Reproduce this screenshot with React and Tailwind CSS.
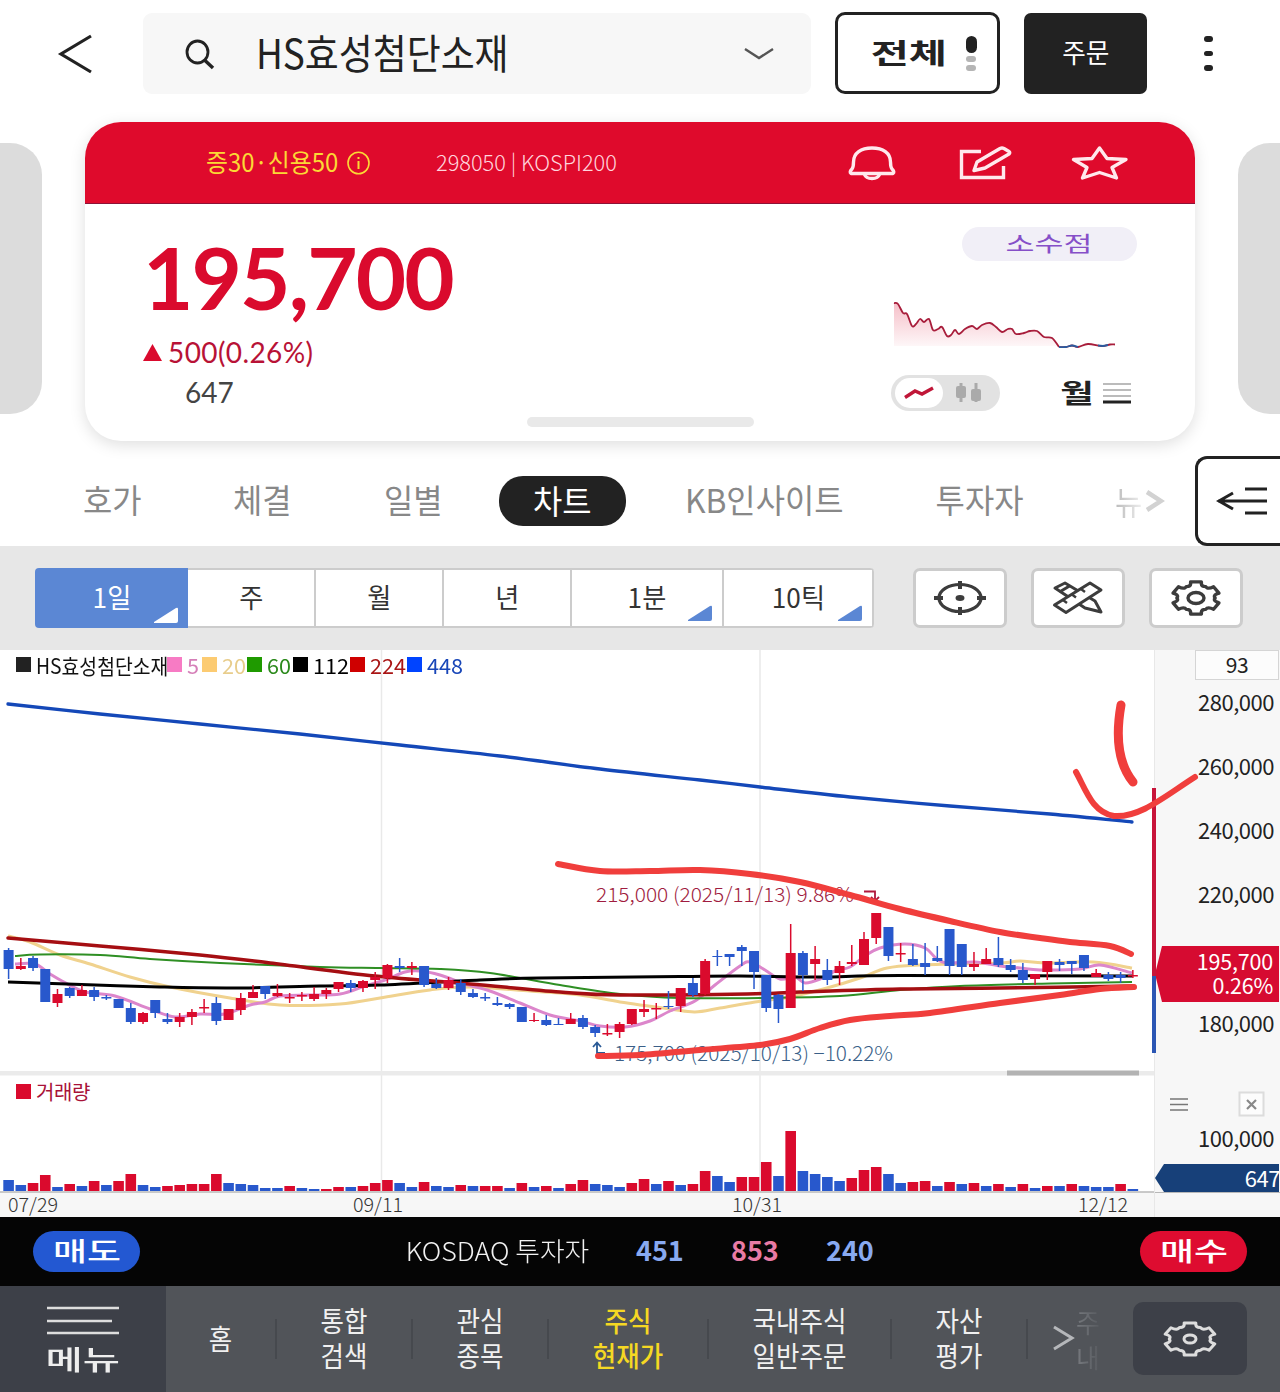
const RED = "#da0a2d";
const BLUE = "#2858cc";

// [direction, body top, body bottom, high, low, volume height, volume direction if it differs]
const CANDLES = [
  ["d", 950, 969, 948, 979, 11], ["u", 966, 969, 958, 970, 6, "d"], ["d", 958, 968, 956, 971, 8, "u"],
  ["d", 969, 1002, 969, 1002, 16, "u"], ["u", 994, 1003, 989, 1007, 4, "d"], ["d", 988, 996, 987, 998, 7, "u"],
  ["u", 990, 996, 985, 996, 5, "d"], ["d", 990, 997, 987, 1001, 10, "u"], ["d", 997, 998.5, 995, 1000, 6],
  ["d", 999, 1008, 999, 1008, 10, "u"], ["d", 1008, 1022, 1003, 1024, 17, "u"], ["u", 1013, 1022, 1012, 1024, 6, "d"],
  ["d", 1000, 1013, 1000, 1018, 4], ["d", 1019, 1022, 1013, 1024, 5, "u"], ["u", 1017, 1022, 1013, 1027, 6],
  ["u", 1012, 1017, 1009, 1025, 7], ["u", 1007, 1008.5, 999, 1013, 7], ["d", 1003, 1021, 997, 1025, 17, "u"],
  ["u", 1009, 1020, 1009, 1020, 8, "d"], ["u", 998, 1010, 993, 1015, 7, "d"], ["u", 992, 998, 985, 998, 6, "d"],
  ["d", 986, 994, 986, 999, 3], ["u", 993, 996, 984, 997, 3, "d"], ["u", 997, 998.5, 993, 1003, 5],
  ["u", 995, 996.5, 992, 1001, 3, "d"], ["u", 994, 999, 987, 1001, 2, "d"], ["u", 990, 994, 988, 999, 2],
  ["u", 982, 989, 982, 992, 4], ["d", 983, 988, 980, 992, 4], ["u", 981, 988, 980, 992, 5],
  ["u", 977, 980, 972, 989, 8], ["u", 965, 978, 964, 983, 11], ["d", 966, 968, 958, 972, 8],
  ["u", 966, 968, 962, 975, 4, "d"], ["d", 966, 985, 966, 987, 9, "u"], ["d", 984, 988, 978, 989, 5],
  ["u", 980, 988, 977, 990, 4, "d"], ["d", 983, 992, 979, 995, 6, "u"], ["d", 993, 997, 989, 998, 5],
  ["d", 997, 998.5, 993, 1001, 5, "u"], ["d", 1003, 1005, 997, 1006, 5, "u"], ["d", 1004, 1007, 1003, 1009, 3],
  ["d", 1007, 1022, 1007, 1022, 8, "u"], ["u", 1020, 1021, 1013, 1022, 4, "d"], ["d", 1020, 1025, 1015, 1026, 5, "u"],
  ["d", 1024, 1025, 1018, 1025, 3], ["u", 1019, 1024, 1013, 1024, 7], ["d", 1018, 1027, 1015, 1029, 11, "u"],
  ["d", 1027, 1033, 1025, 1037, 7], ["u", 1033, 1034.5, 1024, 1036, 6, "d"], ["u", 1024, 1032, 1022, 1038, 4, "d"],
  ["u", 1009, 1024, 1009, 1025, 8], ["u", 1009, 1012, 1000, 1017, 12], ["u", 1008, 1009.5, 1003, 1019, 7, "d"],
  ["d", 1006, 1007, 991, 1009, 10, "u"], ["u", 988, 1006, 988, 1012, 6, "d"], ["d", 983, 995, 978, 997, 7, "u"],
  ["u", 961, 994, 959, 995, 20], ["d", 956, 957, 950, 966, 15], ["d", 954, 957, 954, 966, 9],
  ["d", 947, 951, 945, 966, 14, "u"], ["d", 951, 972, 951, 989, 14, "u"], ["d", 975, 1008, 975, 1012, 29, "u"],
  ["d", 995, 1009, 994, 1023, 15], ["u", 953, 1008, 924, 1008, 60], ["d", 953, 975, 951, 991, 20],
  ["u", 959, 964, 946, 980, 17, "d"], ["d", 970, 980, 959, 985, 14], ["u", 966, 973, 961, 985, 10, "d"],
  ["u", 962, 964, 945, 966, 13], ["u", 939, 965, 932, 965, 21], ["u", 913, 938, 913, 944, 24],
  ["d", 927, 956, 927, 961, 17], ["u", 953, 954.5, 943, 962, 8, "d"], ["d", 959, 965, 944, 966, 9, "u"],
  ["d", 963, 967, 943, 975, 10, "u"], ["d", 958, 961, 946, 962, 5], ["d", 929, 966, 929, 975, 9, "u"],
  ["d", 944, 967, 944, 975, 7], ["u", 964, 967, 952, 971, 8], ["u", 959, 964, 948, 964, 5, "d"],
  ["d", 958, 965, 937, 967, 7, "u"], ["d", 965, 970, 959, 972, 4], ["d", 970, 980, 963, 983, 7, "u"],
  ["u", 974, 979, 974, 985, 3, "d"], ["u", 961, 972, 961, 980, 5], ["d", 962, 965, 959, 971, 5],
  ["d", 961, 964, 961, 974, 7, "u"], ["d", 955, 968, 955, 971, 5], ["u", 973, 977, 969, 977, 4, "d"],
  ["d", 975, 979, 972, 981, 4], ["d", 975, 978, 972, 983, 7, "u"], ["u", 975, 976.5, 970, 978, 2, "d"],
];

const MA5 = [[15, 964], [35, 964], [50, 974], [62, 981], [85, 992], [115, 996], [150, 1009], [175, 1017], [200, 1014], [225, 1014], [250, 1005], [265, 1002], [280, 996], [310, 995], [340, 994], [365, 986], [385, 980], [405, 972], [420, 971], [440, 975], [465, 984], [490, 991], [520, 1003], [550, 1015], [580, 1021], [600, 1026], [625, 1027], [650, 1021], [670, 1011], [695, 1001], [715, 985], [740, 966], [750, 962], [765, 970], [780, 979], [795, 977], [805, 983], [820, 979], [835, 971], [850, 967], [865, 956], [880, 948], [905, 944], [925, 948], [938, 960], [950, 963], [975, 962], [1000, 966], [1020, 968], [1040, 970], [1080, 969], [1100, 965], [1132, 973]];
const MA20 = [[8, 936], [30, 942], [60, 955], [90, 964], [130, 977], [170, 987], [230, 998], [280, 1005], [340, 1004], [380, 998], [430, 990], [470, 987], [530, 991], [580, 995], [620, 1002], [670, 1009], [695, 1012], [720, 1008], [755, 1002], [790, 997], [827, 988], [860, 978], [887, 968], [920, 965], [1000, 963], [1020, 961], [1045, 963], [1093, 962], [1132, 968]];
const MA60 = [[15, 956], [40, 954.5], [100, 955], [150, 959], [220, 963], [320, 967], [380, 968], [440, 969], [490, 973], [560, 985], [620, 994], [680, 998], [760, 998], [840, 996], [900, 990], [960, 986], [1050, 983.5], [1132, 982]];
const MA112 = [[8, 982], [67, 984], [160, 987], [233, 988], [320, 986], [380, 985], [480, 980], [540, 978], [680, 976.5], [740, 976], [820, 977], [900, 975.5], [1132, 976]];
const MA224 = [[8, 938], [100, 946], [200, 955], [270, 963], [375, 976], [470, 984], [560, 992], [620, 995], [747, 994], [800, 992], [900, 989], [1000, 988], [1132, 986]];
const MA448 = [[8, 704], [100, 714], [200, 724], [300, 734], [400, 745], [500, 756], [600, 769], [700, 780], [760, 787], [850, 797], [950, 806], [1050, 814], [1132, 822]];

const TOP_TREND = [[558, 864], [600, 871], [650, 871], [700, 870], [750, 874], [800, 882], [850, 895], [900, 909], [950, 921], [1000, 932], [1040, 938], [1070, 942], [1110, 946], [1131, 954]];
const BOTTOM_TREND = [[598, 1056], [640, 1055], [700, 1050], [760, 1045], [790, 1039], [820, 1028], [850, 1020], [890, 1016], [930, 1013], [1000, 1003], [1060, 995], [1100, 989], [1134, 987]];

const SPARK = [[894, 303], [898, 304], [903, 313], [907, 314], [912, 326], [916, 324], [920, 319], [924, 322], [929, 319], [933, 330], [938, 329], [942, 327], [947, 336], [951, 335], [955, 330], [959, 334], [965, 329], [972, 326], [977, 329], [982, 325], [990, 323], [996, 327], [1002, 332], [1008, 329], [1012, 329], [1016, 334], [1024, 333], [1030, 331], [1037, 331], [1044, 337], [1052, 338], [1059, 347]];
const SPARK_END = [[1059, 347], [1066, 347], [1072, 345.5], [1078, 347], [1088, 344], [1102, 346], [1110, 344.5], [1115, 344.5]];

// Catmull-Rom through every point
const curve = (pts) => {
  let d = `M${pts[0][0]} ${pts[0][1]}`;
  for (let i = 0; i < pts.length - 1; i++) {
    const a = pts[i - 1] || pts[i];
    const b = pts[i];
    const c = pts[i + 1];
    const e = pts[i + 2] || c;
    d += ` C${b[0] + (c[0] - a[0]) / 6} ${b[1] + (c[1] - a[1]) / 6} ${c[0] - (e[0] - b[0]) / 6} ${c[1] - (e[1] - b[1]) / 6} ${c[0]} ${c[1]}`;
  }
  return d;
};

// six-tooth gear, wider than tall
const gearPath = (rx, ry) => {
  const at = (deg, r) => {
    const rad = (deg * Math.PI) / 180;
    return `${(Math.cos(rad) * rx * r).toFixed(2)} ${(Math.sin(rad) * ry * r).toFixed(2)}`;
  };
  let d = "";
  for (let k = 0; k < 6; k++) {
    const c = -90 + k * 60;
    d += `${k ? "L" : "M"}${at(c - 13, 1)} L${at(c + 13, 1)} Q${at(c + 15, 0.78)} ${at(c + 24, 0.77)} Q${at(c + 30, 0.83)} ${at(c + 36, 0.77)} Q${at(c + 45, 0.78)} ${at(c + 47, 1)} `;
  }
  return `${d}Z`;
};

const Gear = ({ color, strokeWidth = 3.4, rx = 24, ry = 16.5, hole = 8 }) => (
  <svg width="60" height="42" viewBox="-30 -21 60 42" fill="none" stroke={color} strokeWidth={strokeWidth} strokeLinejoin="round">
    <path d={gearPath(rx, ry)} />
    <ellipse cx="0" cy="0" rx={hole} ry={hole * 0.68} />
  </svg>
);

const Header = () => (
  <header className="flex h-[94px] items-end">
    <button className="ml-[56px] flex h-[81px] w-[87px] items-center">
      <svg width="38" height="42" fill="none" stroke="#222" strokeWidth="3.2">
        <path d="M35 3 5 21 35 39" />
      </svg>
    </button>
    <div className="flex h-[81px] w-[668px] items-center rounded-[9px] bg-[#f7f7f7] pr-[36px] pl-[42px]">
      <svg width="31" height="32" fill="none" stroke="#222" strokeWidth="2.8">
        <ellipse cx="12.5" cy="14" rx="10.500" ry="11" />
        <path d="M19.500 22 28 30" strokeWidth="3.4" />
      </svg>
      <span className="ml-[40px] inline-block w-[400px] origin-left -translate-y-[2px] scale-x-[0.9] text-[41px] leading-none whitespace-nowrap text-[#222]">
        HS효성첨단소재
      </span>
      <svg className="ml-auto" width="32" height="14" fill="none" stroke="#555" strokeWidth="2.4">
        <path d="M2 2 16 11 30 2" />
      </svg>
    </div>
    <button className="ml-[24px] flex h-[82px] w-[165px] items-center rounded-[10px] border-[3.5px] border-[#222] pl-[45px]">
      <span className="inline-block -translate-y-px scale-x-[1.48] text-[28px] leading-none font-bold text-[#222]">
        전체
      </span>
      <span className="ml-[31px] flex flex-col items-center gap-[3px]">
        <span className="h-[17px] w-[11px] rounded-full bg-[#222]" />
        <span className="h-[6px] w-[10px] rounded-full bg-[#b5b5b5]" />
        <span className="h-[6px] w-[10px] rounded-full bg-[#b5b5b5]" />
      </span>
    </button>
    <button className="ml-[24px] flex h-[81px] w-[123px] items-center justify-center rounded-[7px] bg-[#222]">
      <span className="inline-block -translate-y-[2px] scale-x-[0.95] text-[27px] leading-none text-white">주문</span>
    </button>
    <div className="ml-[57px] flex h-[81px] flex-col items-center justify-center gap-[9px]">
      <span className="h-[5.5px] w-[9px] rounded-full bg-[#222]" />
      <span className="h-[5.5px] w-[9px] rounded-full bg-[#222]" />
      <span className="h-[5.5px] w-[9px] rounded-full bg-[#222]" />
    </div>
  </header>
);

const CardIcons = () => (
  <svg width="290" height="50" viewBox="840 138 290 50" fill="none" stroke="#ffe9ed" strokeWidth="3.4" strokeLinejoin="round">
    <path d="M851 173.500Q849 172 852 169Q853.500 167 853.500 162C853.500 153 861 148 872 148C883 148 890.500 153 890.500 162Q890.500 167 892 169Q895 172 893 173.500Z" />
    <path d="M864.500 174.500Q866 178.500 872 178.500Q878 178.500 879.500 174.500" />
    <path d="M981 151.500H961.500V177.500H1003.500V166" strokeLinejoin="miter" />
    <path d="M974 170.500 977 162 1000 148.500Q1002 147.500 1004 148.500L1009 151.500Q1010.500 152.500 1009 154L985 168Z" />
    <path d="M1099.500 148 1107 158.500 1126 159.500 1112 167.500 1116.500 178 1099.500 172.500 1082.500 178 1087 167.500 1073.500 159.500 1092 158.500Z" />
  </svg>
);

const StockCard = () => (
  <section className="mt-[28px] flex h-[319px] justify-between">
    <div className="mt-[21px] h-[271px] w-[42px] rounded-r-[32px] bg-[#dcdcdc]" />
    <div className="flex w-[1110px] flex-col overflow-hidden rounded-[36px] bg-white shadow-[0_4px_16px_rgba(0,0,0,0.13)]">
      <div className="flex h-[82px] items-center border-b border-[#8c1237] bg-[#df0a2c] pl-[121px]">
        <span className="inline-block w-[141px] origin-left -translate-y-px scale-x-[0.955] text-[25px] leading-none whitespace-nowrap text-[#fbd935]">
          증30·신용50
        </span>
        <svg width="23" height="24" fill="none" stroke="#fbd935" strokeWidth="1.600">
          <ellipse cx="11.500" cy="12" rx="10.500" ry="10.800" />
          <path d="M11.500 10V18M11.500 6V8" strokeWidth="2" />
        </svg>
        <span className="ml-[66px] inline-block w-[200px] origin-left -translate-y-[2px] scale-x-[0.99] text-[22px] leading-none font-light whitespace-nowrap text-[#ffd5dd]">
          298050 | KOSPI200
        </span>
        <div className="ml-auto pr-[65px]">
          <CardIcons />
        </div>
      </div>
      <div className="flex flex-1 justify-between pr-[58px] pl-[58px]">
        <div className="flex flex-col pt-[27px] font-['Lato','Noto_Sans_CJK_KR',sans-serif]">
          <span className="text-[87px] leading-[92px] font-bold tracking-[-1.900px] text-[#da0a2d]">195,700</span>
          <span className="mt-[11px] flex items-center text-[28px] leading-[36px] tracking-[0.4px] text-[#b81236]">
            <svg className="mr-[6px]" width="19" height="17">
              <path d="M9.500 0 19 17H0Z" fill={RED} />
            </svg>
            500(0.26%)
          </span>
          <span className="mt-[4px] pl-[42px] text-[28px] leading-[36px] text-[#444]">647</span>
        </div>
        <div className="flex w-[246px] flex-col">
          <div className="mt-[23px] ml-auto flex h-[34px] w-[175px] items-center justify-center rounded-full bg-[#f1eff7]">
            <span className="inline-block -translate-x-px -translate-y-[2px] scale-x-[1.5] text-[21px] leading-none text-[#864fc8]">
              소수점
            </span>
          </div>
          <svg className="mt-[34px]" width="246" height="60" viewBox="891 295 246 60" fill="none">
            <defs>
              <linearGradient id="spark" x1="0" y1="0" x2="0" y2="1">
                <stop offset="0" stopColor={RED} stopOpacity="0.260" />
                <stop offset="1" stopColor={RED} stopOpacity="0.030" />
              </linearGradient>
            </defs>
            <path d={`${curve(SPARK)} V346 H894Z`} fill="url(#spark)" />
            <path d={curve(SPARK)} stroke="#a81d3b" strokeWidth="1.800" />
            <path d={curve(SPARK_END)} stroke="#a81d3b" strokeWidth="1.800" />
            <path d={curve(SPARK_END.slice(0, 4))} stroke="#2b5da0" strokeWidth="1.800" />
            <path d="M1098 345.500 1103 346 1108 345" stroke="#2b5da0" strokeWidth="1.800" />
          </svg>
          <div className="mt-[20px] flex items-center">
            <div className="flex h-[36px] w-[109px] items-center rounded-full bg-[#e2e2e2] pl-[4px]">
              <span className="flex h-[30px] w-[48px] items-center justify-center rounded-full bg-white">
                <svg width="30" height="14" fill="none" stroke="#c01638" strokeWidth="3.400">
                  <path d="M1 11.500 11 5 18 8 29 2" />
                </svg>
              </span>
              <svg className="ml-[13px]" width="26" height="20" fill="#aaa">
                <rect x="0" y="3" width="10" height="12" rx="2" />
                <rect x="3.500" y="0" width="3" height="19" />
                <rect x="15" y="6" width="10" height="12" rx="2" />
                <rect x="18.500" y="0" width="3" height="19" />
              </svg>
            </div>
            <span className="ml-[65px] inline-block -translate-y-px scale-x-[1.4] text-[26px] leading-none font-bold text-[#222]">
              월
            </span>
            <svg className="ml-auto mr-[5px]" width="30" height="22" stroke="#bbb" strokeWidth="2">
              <path d="M1 2H29M1 8H29M1 14H29" />
              <path d="M1 20H29" stroke="#222" strokeWidth="3" />
            </svg>
          </div>
        </div>
      </div>
      <div className="mx-auto mb-[14px] h-[10px] w-[227px] shrink-0 rounded-full bg-[#e9e9e9]" />
    </div>
    <div className="mt-[21px] h-[271px] w-[42px] rounded-l-[32px] bg-[#dcdcdc]" />
  </section>
);

const TABS = [
  { label: "호가", width: "w-[150px]" },
  { label: "체결", width: "w-[150px]" },
  { label: "일별", width: "w-[152px]" },
  { label: "차트", width: "w-[147px]", active: true },
  { label: "KB인사이트", width: "w-[256px]" },
  { label: "투자자", width: "w-[176px]" },
];

const Tabs = () => (
  <nav className="flex h-[105px] pl-[37px]">
    {TABS.map((tab) => (
      <div key={tab.label} className={`${tab.width} flex items-center justify-center pt-[15px]`}>
        <span
          className={
            tab.active
              ? "flex h-[50px] w-[127px] items-center justify-center rounded-[24px] bg-[#222] text-white"
              : "text-[#888]"
          }
        >
          <span className="inline-block -translate-y-px scale-x-[0.965] text-[33px] leading-none whitespace-nowrap">
            {tab.label}
          </span>
        </span>
      </div>
    ))}
    <div className="flex w-[127px] items-center pt-[15px] pl-[47px]">
      <span className="inline-block w-[30px] origin-left scale-x-[0.9] bg-linear-to-r from-[#bbb] to-[#eee] bg-clip-text text-[33px] leading-[44px] text-transparent">
        뉴
      </span>
      <svg width="20" height="24" fill="none" stroke="#d2d2d2" strokeWidth="4.500">
        <path d="M2 3 16 12 2 21" />
      </svg>
    </div>
    <button className="mt-[15px] flex h-[90px] flex-1 items-center rounded-l-[12px] border-[3px] border-r-0 border-[#222] pl-[18px]">
      <svg width="52" height="32" fill="none" stroke="#222" strokeWidth="3">
        <path d="M29 4H51M2 16H51M29 28H51M17 8 3 16 17 24" />
      </svg>
    </button>
  </nav>
);

const PERIODS = [
  { label: "1일", width: "w-[153px]", active: true, corner: true },
  { label: "주", width: "w-[128px]" },
  { label: "월", width: "w-[128px]" },
  { label: "년", width: "w-[128px]" },
  { label: "1분", width: "w-[152px]", corner: true },
  { label: "10틱", width: "w-[150px]", corner: true },
];

const Toolbar = () => (
  <div className="flex h-[104px] items-center bg-[#e7e7e7] pl-[35px]">
    <div className="flex h-[60px] overflow-hidden rounded-[4px]">
      {PERIODS.map((p) => (
        <button
          key={p.label}
          className={`${p.width} ${
            p.active ? "bg-[#5b87d4] text-white" : "border-y-2 border-r-2 border-[#ccc] bg-white text-[#333]"
          } relative flex items-center justify-center`}
        >
          <span className="inline-block -translate-y-[2px] scale-x-[0.97] text-[27px] leading-none whitespace-nowrap">
            {p.label}
          </span>
          {p.corner && (
            <svg className="absolute right-[9px] bottom-[4px]" width="26" height="17">
              <path
                d="M1 15 23 1Q25 0 25 2V14Q25 16 23 16H1Z"
                fill={p.active ? "#fff" : "#5b87d4"}
              />
            </svg>
          )}
        </button>
      ))}
    </div>
    <div className="ml-[39px] flex gap-[24px]">
      <button className="flex h-[60px] w-[94px] items-center justify-center rounded-[7px] border-[3px] border-[#ccc] bg-white">
        <svg width="52" height="34" fill="none" stroke="#3c3c3c" strokeWidth="3.200">
          <ellipse cx="26" cy="17" rx="21" ry="13.500" />
          <path d="M0 17H9M43 17H52M26 0V8M26 26V34" strokeWidth="4" />
          <ellipse cx="26" cy="17" rx="4.500" ry="3" fill="#3c3c3c" stroke="none" />
        </svg>
      </button>
      <button className="flex h-[60px] w-[94px] items-center justify-center rounded-[7px] border-[3px] border-[#ccc] bg-white">
        <svg width="52" height="34" viewBox="1053 581 52 34" fill="none" stroke="#3c3c3c" strokeWidth="3" strokeLinejoin="round">
          <path d="M1056 588 1066 583 1096 601 1102 612 1086 608Z" fill="#fff" />
          <path d="M1060.500 592 1070.500 586" />
          <path d="M1055.500 605 1091 583 1102 590 1067 612.500Z" fill="#fff" />
          <path d="M1064 600 1068 603M1073 594.500 1077 597.500M1082 589 1086 592" strokeWidth="2.400" />
        </svg>
      </button>
      <button className="flex h-[60px] w-[94px] items-center justify-center rounded-[7px] border-[3px] border-[#ccc] bg-white">
        <Gear color="#3c3c3c" />
      </button>
    </div>
  </div>
);

const LEGEND = [
  { text: "HS효성첨단소재", box: "bg-[#222]", color: "text-[#111]", width: "w-[131px]" },
  { text: "5", box: "bg-[#f77bc4]", color: "text-[#d57fb8]", width: "w-[15px]" },
  { text: "20", box: "bg-[#fccb72]", color: "text-[#e8cd8c]", width: "w-[25px]" },
  { text: "60", box: "bg-[#1f9a00]", color: "text-[#2c8a1c]", width: "w-[26px]" },
  { text: "112", box: "bg-black", color: "text-black", width: "w-[37px]" },
  { text: "224", box: "bg-[#cf0000]", color: "text-[#a91515]", width: "w-[37px]" },
  { text: "448", box: "bg-[#0044ff]", color: "text-[#1846b8]", width: "w-[40px]" },
];

const ChartSvg = () => (
  <svg className="block" width="1154" height="567" viewBox="0 650 1154 567" fill="none">
    <path d="M381.500 650V1192M760 650V1192" stroke="#e9e9e9" strokeWidth="1.500" />
    <rect x="0" y="1071" width="1154" height="4.500" fill="#ebebeb" />
    <rect x="1007" y="1070.500" width="132" height="5" fill="#b3b3b3" />
    <rect x="0" y="1192" width="1154" height="25" fill="#f7f7f7" />
    <path d="M0 1192H1154" stroke="#b8b8b8" strokeWidth="1.500" />

    <path d={curve(MA20)} stroke="#f0d28e" strokeWidth="3" />
    <path d={curve(MA5)} stroke="#dc86cb" strokeWidth="3" />
    <path d={curve(MA60)} stroke="#2f8f24" strokeWidth="2" />
    <path d={curve(MA112)} stroke="#000" strokeWidth="3" />
    <path d={curve(MA224)} stroke="#a50e12" strokeWidth="3.500" strokeLinecap="round" />
    <path d={curve(MA448)} stroke="#1448b8" strokeWidth="3.300" strokeLinecap="round" />

    {CANDLES.map(([dir, top, bottom, high, low, vol, volDir], i) => {
      const x = 8.6 + i * 12.22;
      const color = dir === "u" ? RED : BLUE;
      return (
        <g key={i}>
          <path d={`M${x} ${high}V${low}`} stroke={color} strokeWidth="1.500" />
          <rect x={x - 5} y={top} width="10" height={bottom - top} fill={color} />
          <rect x={x - 5.3} y={1191 - vol} width="10.600" height={vol} fill={(volDir || dir) === "u" ? RED : BLUE} />
        </g>
      );
    })}

    <g fontSize="20" fontWeight="300">
      <text x="596" y="902" textLength="258" lengthAdjust="spacingAndGlyphs" fill="#a01c40">215,000 (2025/11/13) 9.86%</text>
      <text x="614" y="1061" textLength="279" lengthAdjust="spacingAndGlyphs" fill="#3a5f88">175,700 (2025/10/13) −10.22%</text>
    </g>
    <path d="M864 891.500H875V900M871 897 875 901 879 897" stroke="#b0183c" strokeWidth="1.800" />
    <path d="M605 1053H597V1043M593 1047 597 1042.500 601 1047" stroke="#2a5a96" strokeWidth="1.800" />

    <g fontSize="19.500" fill="#333" fontWeight="300">
      <text x="8" y="1212" textLength="50" lengthAdjust="spacingAndGlyphs">07/29</text>
      <text x="353" y="1212" textLength="50" lengthAdjust="spacingAndGlyphs">09/11</text>
      <text x="732" y="1212" textLength="50" lengthAdjust="spacingAndGlyphs">10/31</text>
      <text x="1078" y="1212" textLength="50" lengthAdjust="spacingAndGlyphs">12/12</text>
    </g>
  </svg>
);

const axisLabel = "h-8 pr-[6px] text-right text-[22px] leading-8 tracking-[-0.5px] text-[#222]";

const PriceAxis = () => (
  <aside className="flex flex-1 flex-col border-l border-[#e8e8e8] bg-[#f7f7f7]">
    <div className="ml-[40px] h-[30px] w-[84px] border border-[#d5d5d5] bg-[#fcfcfc] text-center text-[21px] leading-[26px] tracking-[-0.5px] text-[#222]">
      93
    </div>
    <div className="mt-[5px] flex flex-col gap-8">
      <span className={axisLabel}>280,000</span>
      <span className={axisLabel}>260,000</span>
      <span className={axisLabel}>240,000</span>
      <span className={axisLabel}>220,000</span>
    </div>
    <div className="mt-[37px] h-[56px] bg-[#d60b31] pt-[3px] pr-[7px] text-right text-[21.5px] leading-[24px] tracking-[-0.2px] whitespace-pre-line text-white [clip-path:polygon(7px_0,124px_0,124px_100%,7px_100%,0_50%)]">
      {"195,700\n0.26%"}
    </div>
    <span className={`mt-[4px] ${axisLabel}`}>180,000</span>
    <div className="mt-[53px] flex h-[26px] items-center justify-between pr-[15px] pl-[15px]">
      <svg width="18" height="14" stroke="#777" strokeWidth="1.600">
        <path d="M0 2H18M0 7.500H18M0 13H18" />
      </svg>
      <svg width="27" height="26" fill="none" stroke="#dcdcdc" strokeWidth="2">
        <rect x="1.500" y="1.500" width="24" height="23" fill="#fcfcfc" />
        <path d="M9 9 18 18M18 9 9 18" stroke="#888" strokeWidth="2.200" />
      </svg>
    </div>
    <span className={`mt-[4px] ${axisLabel}`}>100,000</span>
    <div className="mt-[11px] h-[28px] bg-[#174079] text-right text-[22px] leading-[27px] tracking-[-0.5px] text-white [clip-path:polygon(9px_0,124px_0,124px_100%,9px_100%,0_50%)]">
      647
    </div>
    <div className="border-t border-[#b8b8b8]" />
  </aside>
);

const Chart = () => (
  <section className="relative flex h-[567px]">
    <ChartSvg />
    <PriceAxis />
    <div className="absolute top-[5px] left-[16px] flex items-start text-[21px] leading-[21px]">
      {LEGEND.map((item, i) => (
        <div key={item.text} className={`flex ${item.color}`}>
          <span className={`mt-[2px] mr-[5px] h-[15px] w-[15px] ${item.box}`} />
          <span className={item.width}>
            <span className={`inline-block origin-left whitespace-nowrap ${i ? "scale-x-[1.03]" : "scale-x-[0.92]"}`}>
              {item.text}
            </span>
          </span>
        </div>
      ))}
    </div>
    <div className="absolute top-[431px] left-[16px] flex text-[20px] leading-[21px] tracking-[-0.4px] text-[#a81238]">
      <span className="mt-[3px] mr-[5px] h-[15px] w-[15px] bg-[#da0a2d]" />
      거래량
    </div>
    {/* hand-drawn trend lines */}
    <svg className="pointer-events-none absolute inset-0" width="1280" height="567" viewBox="0 650 1280 567" fill="none">
      <path d="M1154 788V976" stroke="#c8143a" strokeWidth="4" />
      <path d="M1154 976V1053" stroke="#2b56b4" strokeWidth="4" />
      <g stroke="#f03e3c" strokeLinecap="round" strokeLinejoin="round" strokeWidth="6">
        <path d={curve(TOP_TREND)} />
        <path d={curve(BOTTOM_TREND)} />
        <path d="M1121 705Q1112 756 1133 782" strokeWidth="9" />
        <path d="M1076 772C1086 790 1092 812 1114 816C1140 818 1165 796 1195 777" />
      </g>
    </svg>
  </section>
);

const OrderBar = () => (
  <div className="flex h-[69px] items-center justify-between bg-[#050505] px-[33px]">
    <button className="flex h-[41px] w-[107px] items-center justify-center rounded-full bg-[#2358d2] text-white">
      <span className="inline-block -translate-y-[2px] scale-x-[1.42] text-[26px] leading-none font-medium">매도</span>
    </button>
    <div className="flex -translate-x-[6px] -translate-y-[2px] items-center text-[27px] leading-none font-bold">
      <span className="mr-[35px] inline-block w-[196px] text-right text-[26px] font-light whitespace-nowrap text-[#f2f2f2]">
        <span className="inline-block origin-right scale-x-[1.03]">KOSDAQ 투자자</span>
      </span>
      <span className="w-[95px] pl-[12px] text-[#88a9f0]">451</span>
      <span className="w-[95px] pl-[12px] text-[#e97ba5]">853</span>
      <span className="w-[61px] pl-[12px] text-[#88a9f0]">240</span>
    </div>
    <button className="flex h-[41px] w-[107px] items-center justify-center rounded-full bg-[#de0c30] text-white">
      <span className="inline-block -translate-y-[2px] scale-x-[1.42] text-[26px] leading-none font-medium">매수</span>
    </button>
  </div>
);

const MENU = [
  { label: "홈", width: "w-[111px]" },
  { label: "통합\n검색", width: "w-[136px]" },
  { label: "관심\n종목", width: "w-[136px]" },
  { label: "주식\n현재가", width: "w-[160px]", active: true },
  { label: "국내주식\n일반주문", width: "w-[183px]" },
  { label: "자산\n평가", width: "w-[136px]" },
];

const BottomNav = () => (
  <nav className="flex h-[106px] bg-[#515459]">
    <button className="flex w-[166px] flex-col items-center bg-[#3d4048] pt-[20px] text-[#eee]">
      <svg width="72" height="30" stroke="#ddd" strokeWidth="2.600">
        <path d="M0 2H72M0 15H65M0 27H72" />
      </svg>
      <span className="mt-[9px] inline-block scale-x-[1.5] text-[27px] leading-none font-medium">메뉴</span>
    </button>
    {MENU.map((item) => (
      <div key={item.label} className={`${item.width} flex items-center`}>
        <div
          className={`flex-1 -translate-y-px scale-x-[0.91] text-center text-[28px] leading-[35px] whitespace-pre ${
            item.active ? "font-medium text-[#f5d823]" : "text-[#f0f0f0]"
          }`}
        >
          {item.label}
        </div>
        <div className="h-[40px] w-[2px] bg-[#46494e]" />
      </div>
    ))}
    <div className="flex flex-1 items-center pl-[24px]">
      <svg width="24" height="28" fill="none" stroke="#b5b7ba" strokeWidth="3">
        <path d="M2 2 20 13 2 24" />
      </svg>
      <span className="w-[25px] bg-linear-to-r from-[#777a7f] to-[#56595e] bg-clip-text text-[26px] leading-[35px] whitespace-pre text-transparent">
        {"주\n내"}
      </span>
    </div>
    <button className="mt-[16px] mr-[33px] flex h-[73px] w-[114px] items-center justify-center rounded-[10px] bg-[#3d4048]">
      <Gear color="#ddd" strokeWidth={3} rx={26} ry={16.5} hole={6} />
    </button>
  </nav>
);

const App = () => {
  return (
    <div className="h-[1392px] w-[1280px] overflow-hidden bg-white font-['Noto_Sans_CJK_KR',sans-serif]">
      <Header />
      <StockCard />
      <Tabs />
      <Toolbar />
      <Chart />
      <OrderBar />
      <BottomNav />
    </div>
  );
};

export default App;
